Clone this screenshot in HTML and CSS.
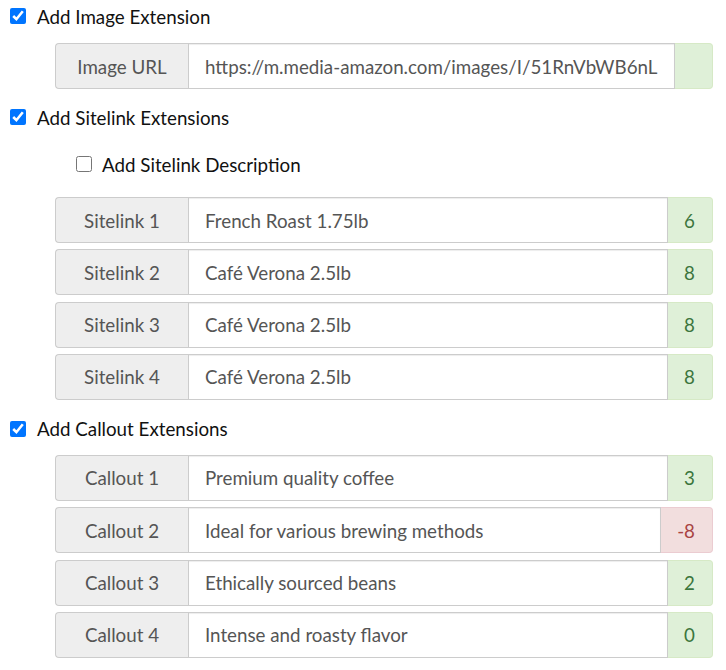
FILE: index.html
```html
<!DOCTYPE html>
<html>
<head>
<meta charset="utf-8">
<link rel="stylesheet" href="styles.css">
</head>
<body>
<div class="page">
  <label class="check first"><input type="checkbox" checked><span>Add Image Extension</span></label>
  <div class="groups groups-image">
    <div class="group">
      <span class="addon">Image URL</span>
      <span class="field">https://m.media-amazon.com/images/I/51RnVbWB6nL</span>
      <span class="count ok"></span>
    </div>
  </div>

  <label class="check second"><input type="checkbox" checked><span>Add Sitelink Extensions</span></label>
  <label class="check sub"><input type="checkbox"><span>Add Sitelink Description</span></label>
  <div class="groups groups-sitelink">
    <div class="group">
      <span class="addon">Sitelink 1</span>
      <span class="field">French Roast 1.75lb</span>
      <span class="count ok">6</span>
    </div>
    <div class="group">
      <span class="addon">Sitelink 2</span>
      <span class="field">Café Verona 2.5lb</span>
      <span class="count ok">8</span>
    </div>
    <div class="group">
      <span class="addon">Sitelink 3</span>
      <span class="field">Café Verona 2.5lb</span>
      <span class="count ok">8</span>
    </div>
    <div class="group">
      <span class="addon">Sitelink 4</span>
      <span class="field">Café Verona 2.5lb</span>
      <span class="count ok">8</span>
    </div>
  </div>

  <label class="check third"><input type="checkbox" checked><span>Add Callout Extensions</span></label>
  <div class="groups groups-callout">
    <div class="group">
      <span class="addon">Callout 1</span>
      <span class="field">Premium quality coffee</span>
      <span class="count ok">3</span>
    </div>
    <div class="group">
      <span class="addon">Callout 2</span>
      <span class="field">Ideal for various brewing methods</span>
      <span class="count bad">-8</span>
    </div>
    <div class="group">
      <span class="addon">Callout 3</span>
      <span class="field">Ethically sourced beans</span>
      <span class="count ok">2</span>
    </div>
    <div class="group">
      <span class="addon">Callout 4</span>
      <span class="field">Intense and roasty flavor</span>
      <span class="count ok">0</span>
    </div>
  </div>
</div>
</body>
</html>
```

FILE: styles.css
```css
html, body {
  margin: 0;
  padding: 0;
  background: #fff;
}

body {
  font-family: Lato, "Open Sans", sans-serif;
  font-size: 18.75px;
  color: #111;
}

.page {
  padding: 4px 13px 0 0;
}

.check {
  display: flex;
  align-items: center;
  height: 24px;
  gap: 11px;
  padding-left: 10px;
  color: #111;
}

.check input {
  width: 16px;
  height: 16px;
  margin: 0;
  flex: none;
}

.check.second { margin-top: 16px; }
.check.sub { margin-top: 23px; padding-left: 76px; gap: 10px; }
.check.third { margin-top: 17px; }

.groups {
  display: flex;
  flex-direction: column;
  gap: 6.33px;
  margin-left: 55px;
}

.groups-image { margin-top: 15px; }
.groups-sitelink { margin-top: 21px; }
.groups-callout { margin-top: 14px; }

.group {
  display: flex;
  height: 46px;
  box-sizing: border-box;
}

.addon {
  flex: none;
  width: 133px;
  box-sizing: border-box;
  display: flex;
  align-items: center;
  justify-content: center;
  background: #eee;
  border: 1px solid #ccc;
  border-right: 0;
  border-radius: 4px 0 0 4px;
  color: #555;
}

.field {
  flex: 1;
  min-width: 0;
  display: flex;
  align-items: center;
  padding-left: 16px;
  border: 1px solid #ccc;
  box-shadow: inset 0 1px 1px rgba(0,0,0,0.075);
  color: #555;
  white-space: nowrap;
  overflow: hidden;
}

.count {
  flex: none;
  min-width: 38px;
  box-sizing: border-box;
  display: flex;
  align-items: center;
  justify-content: center;
  padding: 0 17px 0 16px;
  border: 1px solid;
  border-left: 0;
  border-radius: 0 4px 4px 0;
}

.count.ok {
  background: #dff0d8;
  border-color: #d6e9c6;
  color: #3c763d;
}

.count.bad {
  background: #f2dede;
  border-color: #ebccd1;
  color: #a94442;
}
```
